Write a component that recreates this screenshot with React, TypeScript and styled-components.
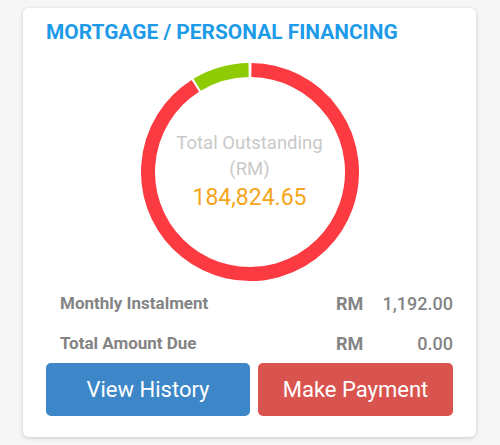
import styled, { createGlobalStyle } from 'styled-components';

const GlobalStyle = createGlobalStyle`
  html, body {
    margin: 0;
    padding: 0;
    background: #f6f6f6;
    font-family: Roboto, "Liberation Sans", Arial, sans-serif;
  }
`;

const Page = styled.div`
  width: 500px;
  height: 445px;
  padding: 8px 24px 0 23px;
  box-sizing: border-box;
`;

const Card = styled.div`
  background: #ffffff;
  border-radius: 6px;
  box-shadow: 0 1px 4px rgba(0, 0, 0, 0.18);
  padding: 12px 23px 21px;
  display: flex;
  flex-direction: column;
`;

const Title = styled.h2`
  margin: 0;
  font-size: 20.9px;
  line-height: 24px;
  font-weight: 700;
  color: #1d9be8;
`;

const ChartWrap = styled.div`
  position: relative;
  width: 222px;
  height: 222px;
  margin: 17px auto 0;
`;

const ChartText = styled.div`
  position: absolute;
  inset: 0;
  display: flex;
  flex-direction: column;
  align-items: center;
  justify-content: center;
`;

const Label = styled.div`
  font-size: 18.5px;
  line-height: 26px;
  color: #c9c9c9;
`;

const Amount = styled.div`
  font-size: 23px;
  line-height: 32px;
  color: #f5a51c;
`;

const Row = styled.div`
  display: flex;
  align-items: center;
  height: 40px;
  padding-left: 14px;
  color: #848484;
  font-size: 17px;
`;

const RowLabel = styled.span`
  flex: 1;
  font-weight: 700;
`;

const Currency = styled.span`
  font-weight: 700;
  font-size: 18px;
  width: 41px;
`;

const Value = styled.span`
  width: 76px;
  text-align: right;
  font-weight: 500;
  font-size: 18px;
`;

const Buttons = styled.div`
  display: grid;
  grid-template-columns: 204px 1fr;
  gap: 8px;
`;

const Button = styled.button<{ $tone: 'blue' | 'red' }>`
  height: 53px;
  border: none;
  border-radius: 5px;
  background: ${(p) => (p.$tone === 'blue' ? '#3d87c8' : '#d9534f')};
  color: #ffffff;
  font-family: Roboto, "Liberation Sans", Arial, sans-serif;
  font-size: 22px;
  cursor: pointer;
`;

const R = 102;
const C = 111;

function arc(startDeg: number, endDeg: number) {
  const toXY = (d: number) => {
    const a = ((d - 90) * Math.PI) / 180;
    return [C + R * Math.cos(a), C + R * Math.sin(a)];
  };
  const [x1, y1] = toXY(startDeg);
  const [x2, y2] = toXY(endDeg);
  const large = endDeg - startDeg > 180 ? 1 : 0;
  return `M ${x1} ${y1} A ${R} ${R} 0 ${large} 1 ${x2} ${y2}`;
}

export default function App() {
  return (
    <>
      <GlobalStyle />
      <Page>
        <Card>
          <Title>MORTGAGE / PERSONAL FINANCING</Title>
          <ChartWrap>
            <svg width="222" height="222" viewBox="0 0 222 222">
              <path d={arc(0.8, 327.6)} stroke="#fb3b41" strokeWidth="14" fill="none" />
              <path d={arc(328.8, 359.2)} stroke="#8fcb04" strokeWidth="14" fill="none" />
            </svg>
            <ChartText>
              <Label>Total Outstanding</Label>
              <Label>(RM)</Label>
              <Amount>184,824.65</Amount>
            </ChartText>
          </ChartWrap>
          <Row>
            <RowLabel>Monthly Instalment</RowLabel>
            <Currency>RM</Currency>
            <Value>1,192.00</Value>
          </Row>
          <Row>
            <RowLabel>Total Amount Due</RowLabel>
            <Currency>RM</Currency>
            <Value>0.00</Value>
          </Row>
          <Buttons>
            <Button $tone="blue">View History</Button>
            <Button $tone="red">Make Payment</Button>
          </Buttons>
        </Card>
      </Page>
    </>
  );
}
